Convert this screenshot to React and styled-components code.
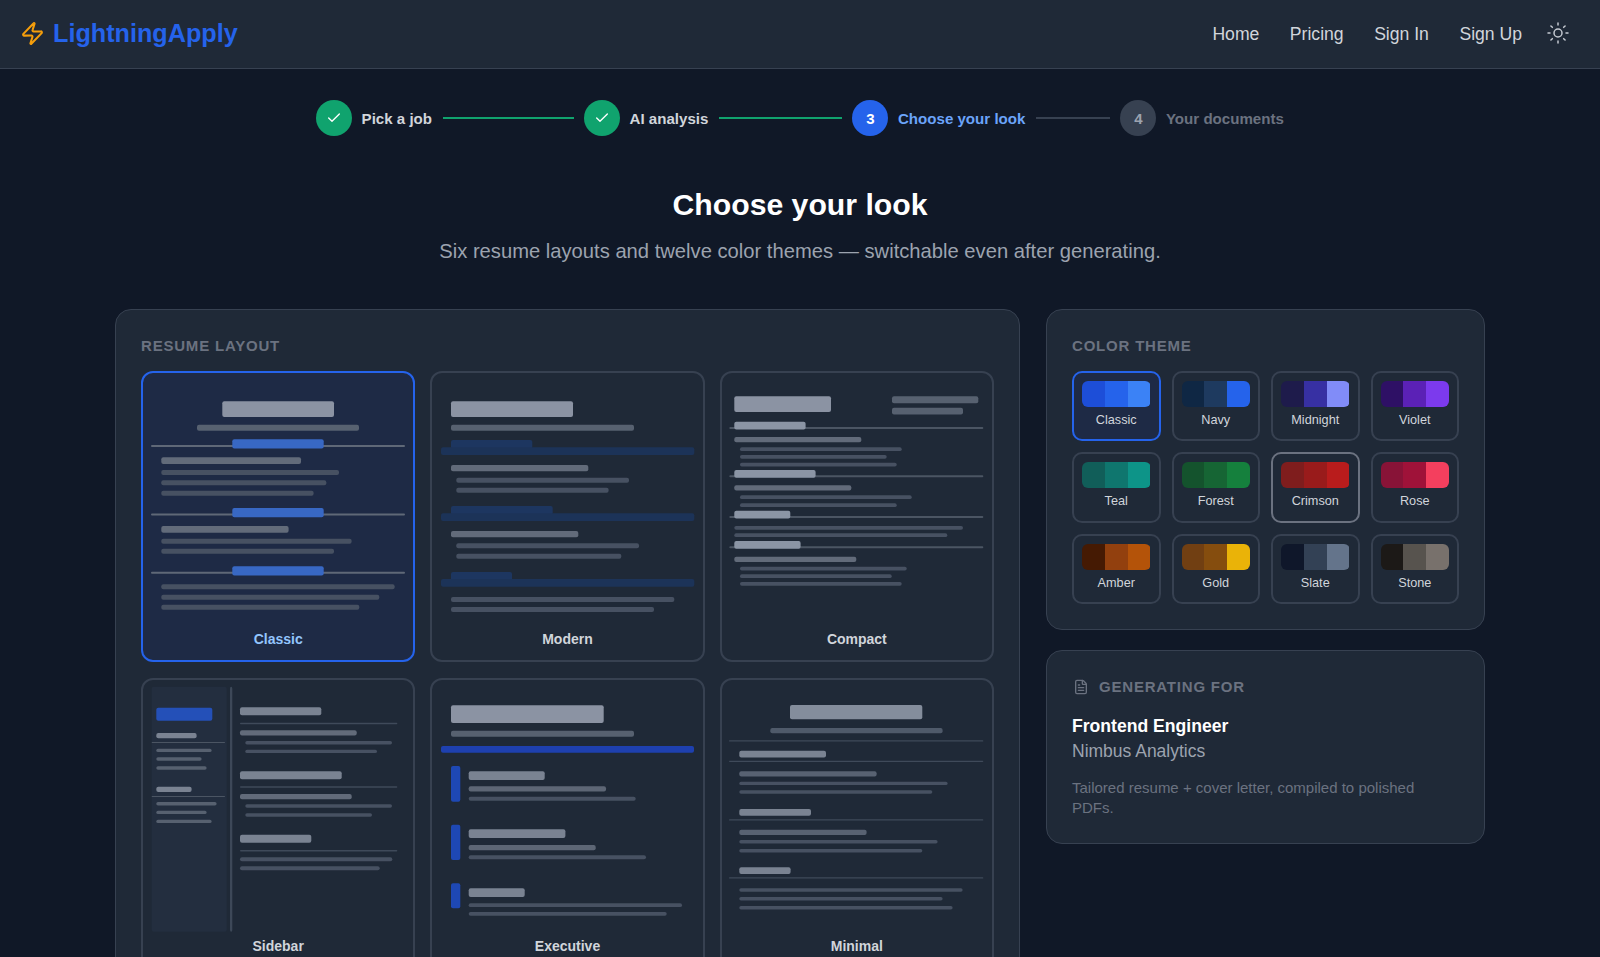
import React from "react";
import styled, { createGlobalStyle } from "styled-components";
import { Zap, Sun, Check, FileText } from "lucide-react";

const GlobalStyle = createGlobalStyle`
  html, body { margin: 0; padding: 0; background: #101827; }
  body { font-family: "Liberation Sans", Arial, sans-serif; }
  * { box-sizing: border-box; }
`;

//styling
const Page = styled.div`
  height: 957px;
  overflow: hidden;
  background: #101827;
`;
const Header = styled.header`
  height: 69px;
  background: #1f2937;
  border-bottom: 1px solid #374151;
  display: flex;
  align-items: center;
  justify-content: space-between;
  padding: 0 30px 2px 20px;
`;
const Logo = styled.div`
  display: flex;
  align-items: center;
  gap: 8px;
  color: #2563eb;
  font-size: 25.2px;
  font-weight: 700;
  svg { color: #f59e0b; }
`;
const Nav = styled.nav`
  display: flex;
  align-items: center;
  gap: 30.5px;
  font-size: 17.6px;
  color: #d1d5db;
  padding-top: 2px;
  svg { color: #c4c9d1; margin-left: -6.5px; margin-top: -2px; }
`;
const Stepper = styled.div`
  display: flex;
  align-items: center;
  justify-content: center;
  gap: 10.5px;
  margin-top: 31px;
`;
const Step = styled.div`
  display: flex;
  align-items: center;
  gap: 9.5px;
`;
const Circle = styled.div`
  width: 36px;
  height: 36px;
  border-radius: 50%;
  display: flex;
  align-items: center;
  justify-content: center;
  font-size: 15px;
  font-weight: 700;
  background: ${p => p.$state === "done" ? "#10a36e" : p.$state === "active" ? "#2563eb" : "#374151"};
  color: ${p => p.$state === "todo" ? "#9ca3af" : "#fff"};
`;
const StepLabel = styled.span`
  font-size: 15.1px;
  font-weight: 700;
  color: ${p => p.$state === "done" ? "#d1d5db" : p.$state === "active" ? "#6ba4fa" : "#6b7280"};
`;
const StepLine = styled.div`
  height: 2px;
  width: ${p => p.$width}px;
  background: ${p => p.$done ? "#10a36e" : "#374151"};
`;
const Title = styled.h1`
  margin: 50px 0 0;
  text-align: center;
  font-size: 30.2px;
  line-height: 38px;
  font-weight: 700;
  color: #fff;
`;
const Subtitle = styled.p`
  margin: 13px 0 0;
  text-align: center;
  font-size: 20.2px;
  line-height: 28px;
  color: #9ca3af;
`;
const Columns = styled.div`
  width: 1370px;
  margin: 44px auto 0;
  display: grid;
  grid-template-columns: 905px 439px;
  column-gap: 26px;
  align-items: start;
`;
const Side = styled.div`
  display: flex;
  flex-direction: column;
  gap: 20.5px;
`;
const Panel = styled.section`
  background: #1f2937;
  border: 1px solid #374151;
  border-radius: 16px;
  padding: 25px;
`;
const PanelLabel = styled.h2`
  display: flex;
  align-items: center;
  gap: 10px;
  margin: 0 0 ${p => p.$flush ? 0 : 14}px;
  font-size: 15px;
  line-height: 22px;
  font-weight: 700;
  letter-spacing: 0.8px;
  color: #6b7280;
  svg { margin-left: 1px; }
`;
const LayoutGrid = styled.div`
  display: grid;
  grid-template-columns: repeat(3, 1fr);
  gap: 16px 15px;
`;
const LayoutCard = styled.div`
  height: 291px;
  border-radius: 12px;
  border: 2px solid ${p => p.$selected ? "#2563eb" : "#374151"};
  background: ${p => p.$selected ? "#1e2a45" : "transparent"};
  display: flex;
  flex-direction: column;
  svg { display: block; flex: none; margin-left: 0.7px; filter: blur(0.35px); }
`;
const LayoutName = styled.div`
  margin-top: 1px;
  text-align: center;
  font-size: 14px;
  line-height: 20px;
  font-weight: 700;
  color: ${p => p.$selected ? "#93c5fd" : "#d1d5db"};
`;
const ThemeGrid = styled.div`
  display: grid;
  grid-template-columns: repeat(4, 1fr);
  grid-auto-rows: 70.3px;
  gap: 11px;
`;
const ThemeCard = styled.div`
  border-radius: 10px;
  border: 2px solid ${p => p.$selected ? "#2563eb" : p.$hover ? "#6b7280" : "#374151"};
  background: ${p => p.$selected ? "#1e2a45" : "transparent"};
  padding: 8px 8px 0;
`;
const Strip = styled.div`
  display: flex;
  height: 26px;
  border-radius: 6px;
  overflow: hidden;
`;
const StripPart = styled.div`
  flex: 1;
  background: ${p => p.$color};
`;
const ThemeName = styled.div`
  margin-top: 4px;
  text-align: center;
  font-size: 12.7px;
  line-height: 18px;
  color: #d1d5db;
`;
const JobTitle = styled.div`
  margin-top: 16px;
  font-size: 17.6px;
  line-height: 24px;
  font-weight: 700;
  color: #fff;
`;
const Company = styled.div`
  margin-top: 1px;
  font-size: 17.5px;
  line-height: 24px;
  color: #9ca3af;
`;
const Note = styled.p`
  margin: 15px 0 0;
  font-size: 15px;
  line-height: 20px;
  color: #6b7280;
`;

const STEPS = [
  { label: "Pick a job", state: "done", line: 131 },
  { label: "AI analysis", state: "done", line: 123 },
  { label: "Choose your look", state: "active", n: 3, line: 74 },
  { label: "Your documents", state: "todo", n: 4 },
];

const THEMES = [
  ["Classic", "#1d4ed8", "#2563eb", "#3b82f6"],
  ["Navy", "#0f2744", "#1e3a5f", "#2563eb"],
  ["Midnight", "#1e1b4b", "#3730a3", "#818cf8"],
  ["Violet", "#2e1065", "#5b21b6", "#7c3aed"],
  ["Teal", "#115e59", "#0f766e", "#0d9488"],
  ["Forest", "#14532d", "#166534", "#15803d"],
  ["Crimson", "#7f1d1d", "#991b1b", "#b91c1c"],
  ["Rose", "#881337", "#9f1239", "#f43f5e"],
  ["Amber", "#451a03", "#92400e", "#b45309"],
  ["Gold", "#713f12", "#854d0e", "#eab308"],
  ["Slate", "#0f172a", "#334155", "#64748b"],
  ["Stone", "#1c1917", "#57534e", "#78716c"],
];

// colours of the little resume thumbnails
const TITLE = "#8b93a3";
const SUB = "#576170";
const HEAD = "#7a8392";
const ITEM = "#626b7a";
const TEXT = "#475162";
const RULE = "#3f4a5a";
const BLUE = "#1e48b4";
const BAND = "#1c3358";
const BAND_HEAD = "#1d3660";

// each shape is x, y, w, h, colour, measured inside the card
const LAYOUTS = [
  { name: "Classic", selected: true, shapes: [
    [78.3, 28.3, 111.7, 15.7, TITLE], [53, 51.7, 162, 6, SUB],
    [7, 72, 254, 2, "#5f6877"], [88.3, 66.3, 91.4, 9.3, "#3868c4"],
    [17.3, 84.3, 139.7, 6.7, ITEM], [17.3, 97, 177.7, 5, TEXT], [17.3, 107.3, 165, 5, TEXT], [17.3, 117.7, 152.3, 5, TEXT],
    [7, 140.6, 254, 2, "#5f6877"], [88.3, 135, 91.4, 9.3, "#3868c4"],
    [17.3, 153, 127.3, 6.7, ITEM], [17.3, 165.7, 190.3, 5, TEXT], [17.3, 175.7, 172.7, 5, TEXT],
    [7, 198.7, 254, 2, "#5f6877"], [88.3, 193.3, 91.4, 9.3, "#3868c4"],
    [17.3, 211.3, 233.3, 5, TEXT], [17.3, 221.7, 218, 5, TEXT], [17.3, 231.7, 198, 5, TEXT],
  ] },
  { name: "Modern", shapes: [
    [18, 28.3, 122, 15.7, TITLE], [18, 51.7, 183, 6, SUB],
    [18, 67, 81.3, 9, BAND_HEAD], [8, 74.3, 253.3, 7.7, BAND],
    [18, 92, 137.3, 6.3, ITEM], [23.3, 104.7, 172.7, 5, TEXT], [23.3, 114.7, 152.3, 5, TEXT],
    [18, 133, 101.7, 9, BAND_HEAD], [8, 140.3, 253.3, 7.7, BAND],
    [18, 158, 127.3, 6.3, ITEM], [23.3, 170.3, 182.7, 5, TEXT], [23.3, 180.7, 165, 5, TEXT],
    [18, 199, 61, 9, BAND_HEAD], [8, 206, 253.3, 7.7, BAND],
    [18, 224, 223.3, 5, TEXT], [18, 234, 203, 5, TEXT],
  ] },
  { name: "Compact", shapes: [
    [12.3, 23.3, 96.7, 15.7, TITLE], [170, 23.3, 86.3, 7, SUB], [170, 34.7, 71, 6.7, SUB],
    [7.3, 54, 254, 2, "#4b5563"], [12.3, 48.7, 71.3, 7.7, "#8b95a5"],
    [12.3, 64, 127, 5.3, ITEM], [18, 74.3, 161.7, 3.7, TEXT], [18, 82, 146.7, 3.7, TEXT], [18, 89.7, 156.7, 3.7, TEXT],
    [7.3, 102.3, 254, 2, "#4b5563"], [12.3, 97, 81.3, 7.7, "#8b95a5"],
    [12.3, 112.3, 117, 5.3, ITEM], [18, 122.3, 171.7, 3.7, TEXT], [18, 130.3, 156.7, 3.7, TEXT],
    [7.3, 143, 254, 2, "#4b5563"], [12.3, 137.7, 56, 7.7, "#8b95a5"],
    [12.3, 153, 228.7, 3.7, TEXT], [12.3, 160.3, 213, 3.7, TEXT],
    [7.3, 173.3, 254, 2, "#4b5563"], [12.3, 168, 66.3, 7.7, "#8b95a5"],
    [12.3, 183.7, 122, 5.3, ITEM], [18, 193.7, 166.7, 3.7, TEXT], [18, 201.3, 151.7, 3.7, TEXT], [18, 209, 161.7, 3.7, TEXT],
  ] },
  { name: "Sidebar", shapes: [
    [7.7, 6.7, 75, 245, "#232e3f"], [86, 6.7, 2.3, 245, "#3d4858"],
    [12.3, 27.7, 56, 13, "#2450b8"],
    [12.3, 53, 40.3, 5.3, HEAD], [7.7, 62, 73.3, 1, "#4b5563"],
    [12.3, 68.7, 55.3, 3.4, SUB], [12.3, 77.3, 45.3, 3.4, SUB], [12.3, 86.3, 50.3, 3.4, SUB],
    [12.3, 106.7, 35.3, 5.3, HEAD], [7.7, 116, 73.3, 1, "#4b5563"],
    [12.3, 122, 60.3, 3.4, SUB], [12.3, 130.7, 50.3, 3.4, SUB], [12.3, 139.7, 55.3, 3.4, SUB],
    [96, 27.3, 81.3, 8, HEAD], [96, 42.7, 157.3, 1.5, RULE],
    [96, 50.3, 116.7, 5.3, ITEM], [101.3, 61, 146.7, 3.4, TEXT], [101.3, 69.7, 131.7, 3.4, TEXT],
    [96, 91.3, 101.7, 8, HEAD], [96, 106.3, 157.3, 1.5, RULE],
    [96, 114, 111.7, 5.3, ITEM], [101.3, 124.3, 146.7, 3.4, TEXT], [101.3, 133.3, 126.7, 3.4, TEXT],
    [96, 154.7, 71.3, 8, HEAD], [96, 170, 157.3, 1.5, RULE],
    [96, 177.3, 152.3, 4, TEXT], [96, 186.3, 139.7, 4, TEXT],
  ] },
  { name: "Executive", shapes: [
    [18, 25.3, 152.7, 17.7, TITLE], [18, 50.7, 183, 6, SUB], [8, 66, 253, 6.7, "#1e40af"],
    [18, 86, 9.3, 35.7, BLUE], [35.7, 91.3, 76, 8.7, HEAD], [35.7, 106.3, 137.3, 5.3, "#5d6675"], [35.7, 116.7, 167, 4, TEXT],
    [18, 144.7, 9.3, 35.3, BLUE], [35.7, 149.3, 96.7, 8.7, HEAD], [35.7, 165, 127, 5.3, "#5d6675"], [35.7, 175.3, 177.3, 4, TEXT],
    [18, 203.3, 9.3, 25, BLUE], [35.7, 208.3, 56, 8.7, HEAD], [35.7, 223.3, 213.3, 3.7, TEXT], [35.7, 232, 198, 3.7, TEXT],
  ] },
  { name: "Minimal", shapes: [
    [68, 25, 132.3, 14.3, "#848d9c"], [48.3, 48, 172.3, 5.3, "#4f5a6a"], [7, 60.3, 254.3, 1.3, RULE],
    [17.3, 70.7, 86.7, 6.7, HEAD], [7, 80.7, 254.3, 1.3, RULE],
    [17.3, 91.3, 137.3, 5.3, "#586272"], [17.3, 101.7, 208.3, 3.4, TEXT], [17.3, 110.3, 193, 3.4, TEXT],
    [17.3, 129, 71.7, 6.7, HEAD], [7, 139.3, 254.3, 1.3, RULE],
    [17.3, 149.7, 127.3, 5.3, "#586272"], [17.3, 160, 198.3, 3.4, TEXT], [17.3, 169, 183, 3.4, TEXT],
    [17.3, 187.3, 51.3, 6.7, HEAD], [7, 197.3, 254.3, 1.3, RULE],
    [17.3, 208.3, 223.3, 3.4, TEXT], [17.3, 217, 203.3, 3.4, TEXT], [17.3, 226, 213.3, 3.4, TEXT],
  ] },
];

const Thumbnail = ({ shapes }) => (
  <svg width="269" height="255" viewBox="0 0 269 255" aria-hidden="true">
    {shapes.map(([x, y, width, height, fill], i) => (
      <rect key={i} x={x} y={y} width={width} height={height} fill={fill} rx={Math.min(2, height / 2)} />
    ))}
  </svg>
);

const App = () => (
  <Page>
    <GlobalStyle />
    <Header>
      <Logo>
        <Zap size={25} strokeWidth={2} />
        LightningApply
      </Logo>
      <Nav>
        <span>Home</span>
        <span>Pricing</span>
        <span>Sign In</span>
        <span>Sign Up</span>
        <Sun size={24} strokeWidth={1.5} />
      </Nav>
    </Header>
    <Stepper>
      {STEPS.map(step => (
        <React.Fragment key={step.label}>
          <Step>
            <Circle $state={step.state}>
              {step.state === "done" ? <Check size={16} strokeWidth={2} /> : step.n}
            </Circle>
            <StepLabel $state={step.state}>{step.label}</StepLabel>
          </Step>
          {step.line && <StepLine $width={step.line} $done={step.state === "done"} />}
        </React.Fragment>
      ))}
    </Stepper>
    <Title>Choose your look</Title>
    <Subtitle>Six resume layouts and twelve color themes — switchable even after generating.</Subtitle>
    <Columns>
      <Panel>
        <PanelLabel>RESUME LAYOUT</PanelLabel>
        <LayoutGrid>
          {LAYOUTS.map(layout => (
            <LayoutCard key={layout.name} $selected={layout.selected}>
              <Thumbnail shapes={layout.shapes} />
              <LayoutName $selected={layout.selected}>{layout.name}</LayoutName>
            </LayoutCard>
          ))}
        </LayoutGrid>
      </Panel>
      <Side>
        <Panel>
          <PanelLabel>COLOR THEME</PanelLabel>
          <ThemeGrid>
            {THEMES.map(([name, ...colors]) => (
              <ThemeCard key={name} $selected={name === "Classic"} $hover={name === "Crimson"}>
                <Strip>
                  {colors.map(c => <StripPart key={c} $color={c} />)}
                </Strip>
                <ThemeName>{name}</ThemeName>
              </ThemeCard>
            ))}
          </ThemeGrid>
        </Panel>
        <Panel>
          <PanelLabel $flush>
            <FileText size={16} strokeWidth={2} />
            GENERATING FOR
          </PanelLabel>
          <JobTitle>Frontend Engineer</JobTitle>
          <Company>Nimbus Analytics</Company>
          <Note>Tailored resume + cover letter, compiled to polished PDFs.</Note>
        </Panel>
      </Side>
    </Columns>
  </Page>
);

export default App;
